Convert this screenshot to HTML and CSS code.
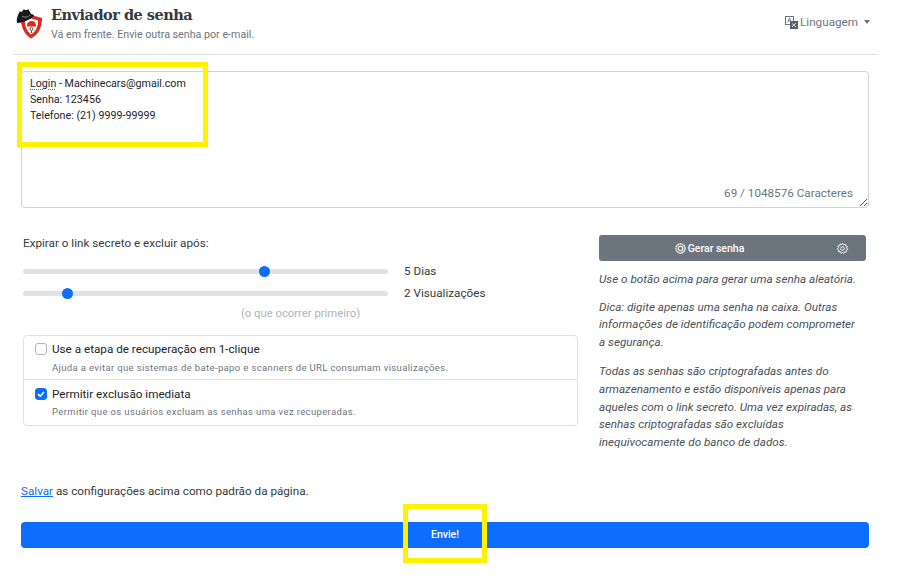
FILE: index.html
```html
<!DOCTYPE html>
<html lang="pt">
<head>
<meta charset="utf-8">
<title>Enviador de senha</title>
<link rel="stylesheet" href="styles.css">
</head>
<body>
<div class="page">
  <header class="header">
    <svg class="logo" viewBox="0 0 30 34" width="30" height="34">
      <path d="M5 11 L15 7 L26 10 C26 19 23 26 15 30.5 C8 26 5 19 5 11 Z" fill="#e0281c"/>
      <path d="M9 13 L15 10.5 L22 12.5 C22 19 20 23 15 26.5 C11 23 9 19 9 13 Z" fill="#fff"/>
      <path d="M11 17.5 a4.5 4.5 0 0 1 9 0 v1 h-9 Z" fill="#e0281c"/>
      <circle cx="15.5" cy="21" r="1.5" fill="none" stroke="#555" stroke-width="1"/>
      <path d="M15.5 22.5 V25" stroke="#555" stroke-width="1"/>
      <path d="M1 15 C0 10 3 5 4 3 C5 5 6 4 8 1 C9 3 11 2 13 1 C12 3 15 4 15 6 C17 6 18 7 18 8 C13 12 7 15 1 15 Z" fill="#17181c"/>
      <path d="M6 8 C9 10 12 9 14 7" fill="none" stroke="#8a8d95" stroke-width="1"/>
    </svg>
    <div class="heading">
      <h1 class="title">Enviador de senha</h1>
      <p class="subtitle">Vá em frente. Envie outra senha por e-mail.</p>
    </div>
    <div class="lang">
      <svg class="lang-icon" viewBox="0 0 13 13" width="13" height="13">
        <rect x="0.5" y="0.5" width="8" height="8" fill="#fff" stroke="#6c757d"/>
        <rect x="5" y="5" width="8" height="8" fill="#55606b"/>
        <path d="M2.7 6.5 L4.5 2 L6.3 6.5 M3.4 5 H5.6" fill="none" stroke="#6c757d" stroke-width="0.9"/>
        <path d="M7 11 L11 7 M7 7.5 L11 11" stroke="#fff" stroke-width="0.8"/>
      </svg>
      <span>Linguagem</span>
      <span class="caret"></span>
    </div>
  </header>

  <main class="main">
    <div class="secret">
      <div class="secret-text">
        <div><span class="misspelt">Login</span> - Machinecars@gmail.com</div>
        <div>Senha: 123456</div>
        <div>Telefone: (21) 9999-99999</div>
      </div>
      <div class="counter">69 / 1048576 Caracteres</div>
      <svg class="grip" viewBox="0 0 10 10" width="10" height="10">
        <path d="M9 2 L2 9 M9 6 L6 9" stroke="#555" stroke-width="1"/>
      </svg>
    </div>

    <div class="columns">
      <section class="left">
        <p class="expire">Expirar o link secreto e excluir após:</p>
        <div class="slider-row">
          <div class="track"><span class="thumb thumb-days"></span></div>
          <span class="slider-label">5 Dias</span>
        </div>
        <div class="slider-row">
          <div class="track"><span class="thumb thumb-views"></span></div>
          <span class="slider-label">2 Visualizações</span>
        </div>
        <p class="whichever">(o que ocorrer primeiro)</p>
        <div class="options">
          <div class="option">
            <div class="option-main"><span class="check"></span>Use a etapa de recuperação em 1-clique</div>
            <div class="option-help">Ajuda a evitar que sistemas de bate-papo e scanners de URL consumam visualizações.</div>
          </div>
          <div class="option">
            <div class="option-main">
              <span class="check checked">
                <svg viewBox="0 0 12 12" width="12" height="12"><path d="M3 6.2 L5.2 8.2 L9 4" fill="none" stroke="#fff" stroke-width="1.6"/></svg>
              </span>Permitir exclusão imediata
            </div>
            <div class="option-help">Permitir que os usuários excluam as senhas uma vez recuperadas.</div>
          </div>
        </div>
      </section>

      <aside class="right">
        <div class="generate">
          <span class="generate-label">
            <svg class="gear" viewBox="0 0 16 16" width="13" height="13"><circle cx="8" cy="8" r="5.6" fill="none" stroke="#fff" stroke-width="1.6" stroke-dasharray="2.2 0.5"/><circle cx="8" cy="8" r="2.8" fill="none" stroke="#fff" stroke-width="1.4"/></svg>
            Gerar senha
          </span>
          <span class="generate-options">
            <svg class="gear" viewBox="0 0 16 16" width="13" height="13"><path d="M8 1.5 L9.3 3.3 L11.4 2.7 L11.8 4.9 L14 5.4 L13.1 7.4 L14.5 9 L12.6 10.1 L12.7 12.3 L10.5 12.2 L9.4 14.2 L8 12.7 L6.2 14 L5.4 11.9 L3.2 12 L3.5 9.8 L1.6 8.6 L3.1 7 L2.4 4.9 L4.5 4.5 L5.1 2.4 L7 3.2 Z" fill="none" stroke="#fff" stroke-width="1.1"/><circle cx="8" cy="8" r="2.2" fill="none" stroke="#fff" stroke-width="1.1"/></svg>
          </span>
        </div>
        <p class="note">Use o botão acima para gerar uma senha aleatória.</p>
        <p class="note">Dica: digite apenas uma senha na caixa. Outras informações de identificação podem comprometer a segurança.</p>
        <p class="note note-long">Todas as senhas são criptografadas antes do armazenamento e estão disponíveis apenas para aqueles com o link secreto. Uma vez expiradas, as senhas criptografadas são excluídas inequivocamente do banco de dados.</p>
      </aside>
    </div>

    <p class="save"><a class="save-link" href="#">Salvar</a> as configurações acima como padrão da página.</p>
    <div class="submit">Envie!</div>
  </main>
</div>
<div class="mark mark-text"></div>
<div class="mark mark-submit"></div>
</body>
</html>
```
FILE: styles.css
```css
* { box-sizing: border-box; }
html, body { margin: 0; padding: 0; }
body {
  width: 900px;
  height: 581px;
  overflow: hidden;
  background: #fff;
  color: #212529;
  font-family: Roboto, "Liberation Sans", sans-serif;
  font-size: 11.7px;
  position: relative;
}
p, h1 { margin: 0; }
.page { padding: 0 23px 0 13px; }

.header {
  height: 55px;
  border-bottom: 1px solid #dee2e6;
  display: flex;
  align-items: flex-start;
  padding: 6px 0 0 3px;
}
.logo { flex: none; margin-top: 2px; }
.heading { margin-left: 5px; }
.title {
  font-family: "DejaVu Serif", serif;
  font-size: 14.5px;
  letter-spacing: -0.5px;
  line-height: 18px;
  font-weight: 700;
  color: #343a40;
}
.subtitle { font-size: 10.7px; line-height: 14px; color: #6c757d; margin-top: 4px; }
.lang {
  margin-left: auto;
  margin-right: 7px;
  margin-top: 9px;
  display: flex;
  align-items: center;
  color: #6c757d;
  line-height: 14px;
}
.lang-icon { margin-right: 2px; }
.caret {
  margin-left: 6px;
  border-top: 4px solid #6c757d;
  border-left: 3.5px solid transparent;
  border-right: 3.5px solid transparent;
}

.main { padding: 16px 8px 0; }
.secret {
  position: relative;
  height: 137px;
  border: 1px solid #ced4da;
  border-radius: 4px;
  padding: 4px 8px;
}
.secret-text { font-size: 10.7px; line-height: 16px; }
.misspelt { text-decoration: underline dotted #d9302a 1px; text-underline-offset: 2px; }
.counter {
  position: absolute;
  right: 15px;
  bottom: 7px;
  color: #6c757d;
  line-height: 14px;
}
.grip { position: absolute; right: 0; bottom: 0; }

.columns { display: flex; margin-top: 27px; }
.left { width: 557px; padding-left: 2px; flex: none; }
.right { width: 267px; margin-left: 21px; flex: none; }

.expire { line-height: 16px; color: #343a40; }
.slider-row { display: flex; align-items: center; height: 22px; }
.slider-row:first-of-type { margin-top: 9px; }
.track {
  position: relative;
  width: 365px;
  height: 5px;
  border-radius: 3px;
  background: #dee2e6;
  flex: none;
}
.thumb {
  position: absolute;
  top: -3px;
  width: 11px;
  height: 11px;
  border-radius: 50%;
  background: #0d6efd;
}
.thumb-days { left: 236px; }
.thumb-views { left: 39px; }
.slider-label { margin-left: 16px; color: #343a40; }
.whichever {
  width: 555px;
  text-align: center;
  color: #adb5bd;
  font-size: 11.3px;
  line-height: 16px;
  margin-top: 2px;
}
.options {
  margin-top: 13px;
  width: 555px;
  border: 1px solid #dee2e6;
  border-radius: 4px;
}
.option { height: 43px; padding: 4px 11px 0; }
.option + .option { border-top: 1px solid #dee2e6; height: 46px; padding-top: 5px; }
.option-main { display: flex; align-items: center; line-height: 18px; color: #212529; margin-bottom: 1px; }
.option + .option .option-main { margin-bottom: 0; }
.check {
  width: 12px;
  height: 12px;
  flex: none;
  margin-right: 5px;
  border: 1px solid #adb5bd;
  border-radius: 3px;
  background: #fff;
  display: flex;
  align-items: center;
  justify-content: center;
}
.checked { background: #0d6efd; border-color: #0d6efd; }
.check svg { flex: none; }
.option-help {
  margin-left: 17px;
  font-size: 9.5px;
  line-height: 17px;
  letter-spacing: 0.36px;
  color: #6c757d;
}

.generate {
  height: 26px;
  border-radius: 3px;
  background: #6c757d;
  color: #fff;
  display: flex;
  align-items: center;
  font-size: 10.5px;
  font-weight: 500;
}
.generate-label {
  flex: 1;
  display: flex;
  align-items: center;
  justify-content: center;
  gap: 1px;
}
.generate-options { width: 47px; display: flex; justify-content: center; }
.gear { flex: none; }
.note {
  font-size: 11.7px;
  line-height: 17.6px;
  font-style: italic;
  color: #495057;
  margin-top: 10px;
  padding-right: 5px;
}
.note-long { margin-top: 12px; }

.save { margin-top: 32px; line-height: 16px; color: #343a40; }
.save-link { color: #0d6efd; text-decoration: underline; }
.submit {
  margin-top: 23px;
  height: 26px;
  border-radius: 4px;
  background: #0d6efd;
  color: #fff;
  font-size: 10.5px;
  font-weight: 500;
  line-height: 26px;
  text-align: center;
}

.mark { position: absolute; border: 5px solid #fff200; }
.mark-text { left: 17px; top: 62px; width: 191px; height: 85px; }
.mark-submit { left: 403px; top: 504px; width: 84px; height: 59px; }
```
